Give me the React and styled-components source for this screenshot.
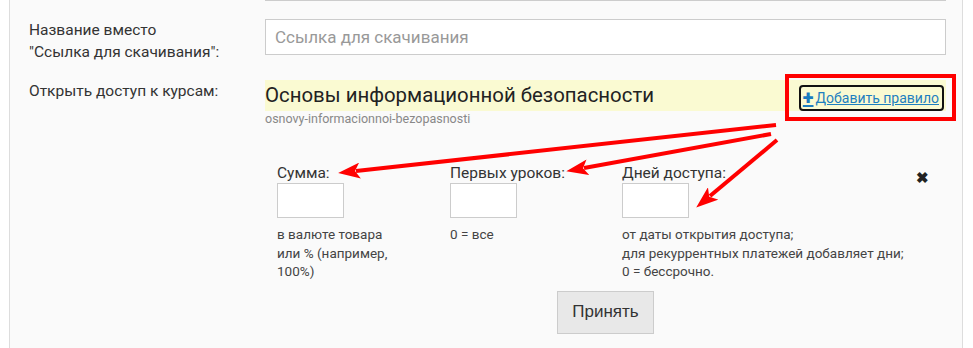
import React from 'react';
import styled, { createGlobalStyle } from 'styled-components';

const GlobalStyle = createGlobalStyle`
    html, body {
        margin: 0;
        background: #fff;
        font-family: Roboto, "Noto Sans", sans-serif;
        color: #333;
    }
`;

const Page = styled.div`
    position: relative;
    width: 973px;
    height: 348px;
    overflow: hidden;
`;

const Panel = styled.div`
    display: flow-root;
    margin-left: 9px;
    width: 954px;
    height: 348px;
    box-sizing: border-box;
    border-left: 1px solid #ddd;
    border-right: 1px solid #ddd;
    background: #fafafa;
    padding: 0 16px 0 19px;
`;

const Row = styled.div`
    display: grid;
    grid-template-columns: 236px 1fr;
    margin-top: ${p => p.top || 0}px;
`;

const Label = styled.div`
    font-size: 15.5px;
    line-height: 22px;
`;

const TextInput = styled.input`
    display: block;
    width: 100%;
    height: 36px;
    box-sizing: border-box;
    border: 1px solid #ccc;
    background: #fff;
    padding: 0 9px;
    font-family: Roboto, sans-serif;
    font-size: 17px;
    color: #333;
    &::placeholder {
        color: #999;
    }
`;

const Course = styled.div`
    display: flex;
    flex-direction: column;
`;

const CourseHead = styled.div`
    display: flex;
    justify-content: space-between;
    align-items: flex-end;
    background: #fafad2;
    height: 31px;
    padding-right: 2px;
`;

const CourseTitle = styled.div`
    font-size: 20.4px;
    line-height: 31px;
    color: #222;
`;

const AddRule = styled.a`
    display: flex;
    align-items: center;
    gap: 2px;
    height: 26px;
    box-sizing: border-box;
    padding: 0 3px 0 2px;
    border: 2px solid #111;
    border-radius: 4px;
    font-size: 14px;
    color: #1e7fc0;
    text-decoration: underline;
    cursor: pointer;
`;

const Plus = styled.span`
    font-weight: 900;
    font-size: 20px;
    line-height: 1;
    color: #1a7bbf;
    margin-top: -2px;
`;

const Slug = styled.div`
    font-size: 12.5px;
    line-height: 16px;
    color: #888;
`;

const Rules = styled.div`
    display: grid;
    grid-template-columns: 173px 172px 1fr 30px;
    margin-top: 36px;
    padding-left: 12px;
`;

const RuleField = styled.div`
    display: flex;
    flex-direction: column;
`;

const RuleLabel = styled.div`
    font-size: 15.5px;
    line-height: 20px;
    color: #333;
`;

const SmallInput = styled.input`
    width: 67px;
    height: 35px;
    box-sizing: border-box;
    border: 1px solid #ccc;
    background: #fff;
    margin-top: 0;
`;

const Hint = styled.div`
    font-size: 13.5px;
    line-height: 18.5px;
    color: #444;
    margin-top: 7px;
    max-width: ${p => p.max || 'none'};
`;

const Remove = styled.span`
    font-size: 15px;
    font-weight: 900;
    color: #222;
    line-height: 1;
    padding-top: 8px;
    cursor: pointer;
`;

const Actions = styled.div`
    display: flex;
    justify-content: center;
    margin-top: 10px;
`;

const Submit = styled.button`
    width: 97px;
    height: 43px;
    background: #e8e8e8;
    border: 1px solid #ccc;
    font-family: "Liberation Sans", Arial, sans-serif;
    font-size: 17px;
    color: #333;
`;

const Overlay = styled.svg`
    position: absolute;
    left: 0;
    top: 0;
    pointer-events: none;
`;

const arrows = [
    [776, 125, 356, 171],
    [771, 134, 584, 168],
    [777, 140, 710, 196]
];

const App = () => {
    return (
        <Page>
            <GlobalStyle />
            <Panel>
                <Row top={-35}>
                    <Label />
                    <TextInput type="text" />
                </Row>
                <Row top={18}>
                    <Label>
                        Название вместо
                        <br />
                        "Ссылка для скачивания":
                    </Label>
                    <TextInput type="text" placeholder="Ссылка для скачивания" />
                </Row>
                <Row top={17}>
                    <Label>Открыть доступ к курсам:</Label>
                    <Course>
                        <CourseHead>
                            <CourseTitle>Основы информационной безопасности</CourseTitle>
                            <AddRule>
                                <Plus>+</Plus>Добавить правило
                            </AddRule>
                        </CourseHead>
                        <Slug>osnovy-informacionnoi-bezopasnosti</Slug>
                        <Rules>
                            <RuleField>
                                <RuleLabel>Сумма:</RuleLabel>
                                <SmallInput type="text" />
                                <Hint max="125px">в валюте товара или % (например, 100%)</Hint>
                            </RuleField>
                            <RuleField>
                                <RuleLabel>Первых уроков:</RuleLabel>
                                <SmallInput type="text" />
                                <Hint>0 = все</Hint>
                            </RuleField>
                            <RuleField>
                                <RuleLabel>Дней доступа:</RuleLabel>
                                <SmallInput type="text" />
                                <Hint>
                                    от даты открытия доступа;
                                    <br />
                                    для рекуррентных платежей добавляет дни;
                                    <br />
                                    0 = бессрочно.
                                </Hint>
                            </RuleField>
                            <Remove>✖</Remove>
                        </Rules>
                        <Actions>
                            <Submit>Принять</Submit>
                        </Actions>
                    </Course>
                </Row>
            </Panel>
            <Overlay width="973" height="348" viewBox="0 0 973 348">
                <defs>
                    <marker
                        id="head"
                        markerUnits="userSpaceOnUse"
                        markerWidth="22"
                        markerHeight="16"
                        refX="4"
                        refY="8"
                        orient="auto"
                    >
                        <path d="M0,0 L22,8 L0,16 L5,8 z" fill="#f00" />
                    </marker>
                </defs>
                <rect x="787" y="76" width="167" height="43" fill="none" stroke="#f00" strokeWidth="4" />
                {arrows.map(([x1, y1, x2, y2], i) => (
                    <line
                        key={i}
                        x1={x1}
                        y1={y1}
                        x2={x2}
                        y2={y2}
                        stroke="#f00"
                        strokeWidth="4"
                        markerEnd="url(#head)"
                    />
                ))}
            </Overlay>
        </Page>
    );
};

export default App;
